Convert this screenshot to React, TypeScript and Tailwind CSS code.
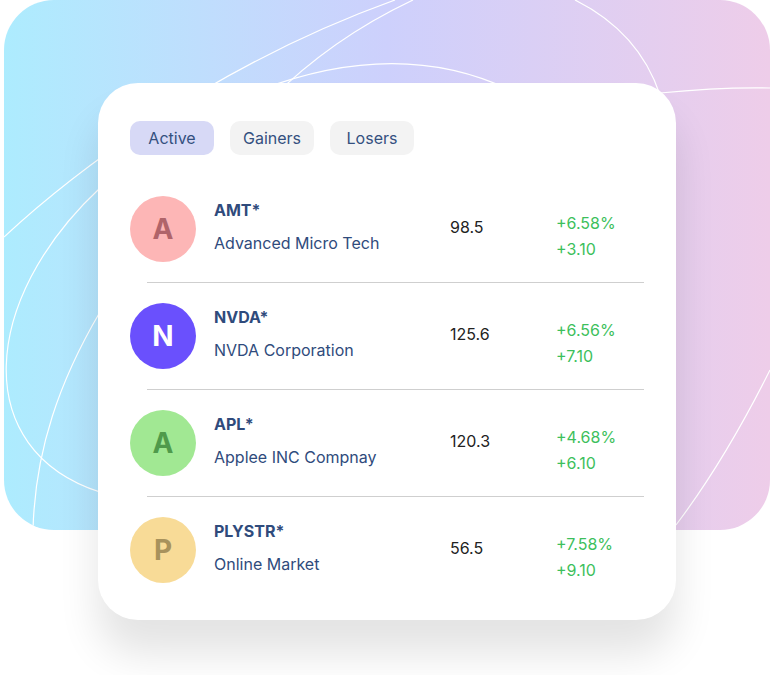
const tabs = [
  { label: 'Active', active: true },
  { label: 'Gainers', active: false },
  { label: 'Losers', active: false },
];

const stocks = [
  {
    letter: 'A',
    ticker: 'AMT*',
    name: 'Advanced Micro Tech',
    price: '98.5',
    pct: '+6.58%',
    change: '+3.10',
    avatar: 'bg-[#fdb6b6] text-[#b0646a]',
  },
  {
    letter: 'N',
    ticker: 'NVDA*',
    name: 'NVDA Corporation',
    price: '125.6',
    pct: '+6.56%',
    change: '+7.10',
    avatar: 'bg-[#6a50fd] text-white',
  },
  {
    letter: 'A',
    ticker: 'APL*',
    name: 'Applee INC Compnay',
    price: '120.3',
    pct: '+4.68%',
    change: '+6.10',
    avatar: 'bg-[#a1e893] text-[#4f9a4b]',
  },
  {
    letter: 'P',
    ticker: 'PLYSTR*',
    name: 'Online Market',
    price: '56.5',
    pct: '+7.58%',
    change: '+9.10',
    avatar: 'bg-[#f8db97] text-[#a8925c]',
  },
];

const Backdrop = () => (
  <div className="relative mx-[4px] h-[530px] overflow-hidden rounded-[50px] bg-gradient-to-r from-[#adecfe] via-[#cdd0fc] to-[#eecde9]">
    <svg
      className="absolute inset-0"
      width="766"
      height="530"
      viewBox="4 0 766 530"
      fill="none"
      stroke="white"
      strokeWidth="1.2"
    >
      <path d="M4,237 C60,185 200,70 395,0" />
      <path d="M413,0 C360,25 310,60 270,100" />
      <path d="M260,90 Q405,35 520,95" />
      <path d="M575,0 C615,20 645,50 660,95" />
      <path d="M660,93 Q720,87 770,88" />
      <path d="M100,188 C-20,300 -30,450 100,492" />
      <path d="M100,312 C60,380 35,450 33,530" />
      <path d="M770,370 C740,430 710,480 676,525" />
    </svg>
  </div>
);

const StockRow = ({ stock, last }: { stock: (typeof stocks)[number]; last: boolean }) => (
  <div>
    <div className="flex h-[106px] items-center pl-[32px]">
      <div
        className={`flex h-[66px] w-[66px] shrink-0 items-center justify-center rounded-full text-[28px] font-bold ${stock.avatar}`}
      >
        {stock.letter}
      </div>
      <div className="ml-[18px] w-[236px] pb-[5px] text-[16px] text-[#2f4b7c]">
        <div className="font-bold leading-[24px]">{stock.ticker}</div>
        <div className="mt-[9px] leading-[24px]">{stock.name}</div>
      </div>
      <div className="w-[106px] pb-[5px] text-[16px] text-[#222]">{stock.price}</div>
      <div className="pt-[13px] text-[16px] leading-[26px] text-[#3dbf5c]">
        <div>{stock.pct}</div>
        <div>{stock.change}</div>
      </div>
    </div>
    {!last && <div className="ml-[49px] mr-[32px] h-px bg-[#cfcfcf]" />}
  </div>
);

export default function App() {
  return (
    <div className="h-[675px] w-[774px] bg-white font-['Inter',sans-serif]">
      <Backdrop />
      <div className="ml-[98px] -mt-[447px] relative w-[578px] rounded-[40px] bg-white pt-[38px] shadow-[0_34px_40px_rgba(0,0,0,0.11)]">
        <div className="flex gap-[16px] pl-[32px]">
          {tabs.map((t) => (
            <div
              key={t.label}
              className={`flex h-[34px] w-[84px] items-center justify-center rounded-[10px] text-[16px] text-[#34507f] ${
                t.active ? 'bg-[#d7d9f6]' : 'bg-[#f3f3f3]'
              }`}
            >
              {t.label}
            </div>
          ))}
        </div>
        <div className="mt-[21px] pb-[17px]">
          {stocks.map((s, i) => (
            <StockRow key={s.ticker} stock={s} last={i === stocks.length - 1} />
          ))}
        </div>
      </div>
    </div>
  );
}
